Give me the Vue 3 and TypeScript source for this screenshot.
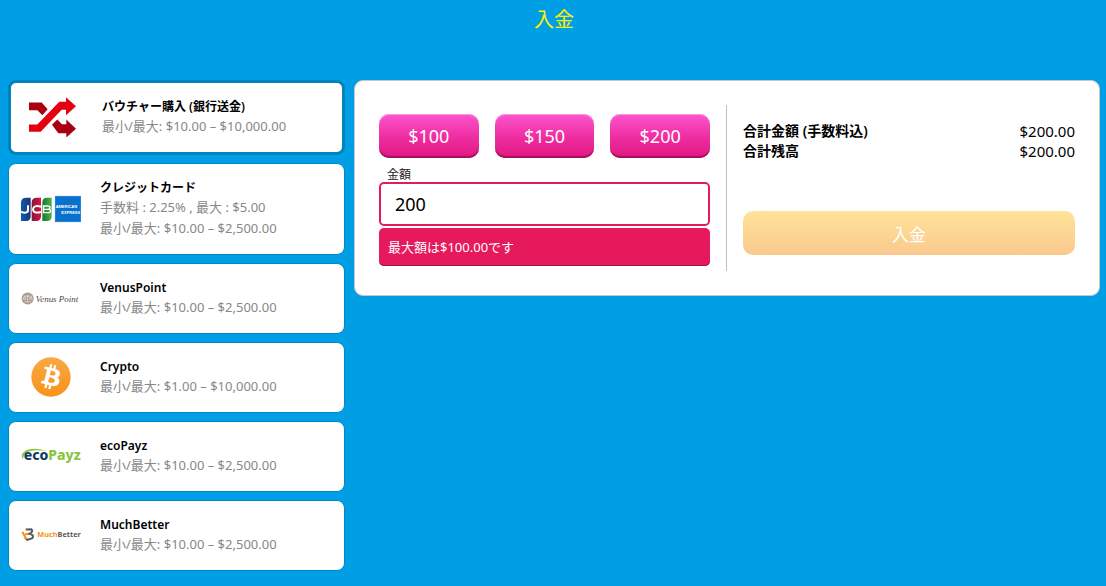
<script setup lang="ts">
import { ref } from 'vue'

interface Method {
  id: string
  name: string
  details: string[]
}

const methods: Method[] = [
  { id: 'voucher', name: 'バウチャー購入 (銀行送金)', details: ['最小/最大: $10.00 – $10,000.00'] },
  { id: 'card', name: 'クレジットカード', details: ['手数料 : 2.25% , 最大 : $5.00', '最小/最大: $10.00 – $2,500.00'] },
  { id: 'venus', name: 'VenusPoint', details: ['最小/最大: $10.00 – $2,500.00'] },
  { id: 'crypto', name: 'Crypto', details: ['最小/最大: $1.00 – $10,000.00'] },
  { id: 'eco', name: 'ecoPayz', details: ['最小/最大: $10.00 – $2,500.00'] },
  { id: 'much', name: 'MuchBetter', details: ['最小/最大: $10.00 – $2,500.00'] },
]
const presets = [100, 150, 200]
const selected = ref('voucher')
const amount = ref('200')
const total = () => '$' + (Number(amount.value) || 0).toFixed(2)
</script>

<template>
  <main class="page">
    <h1 class="title">入金</h1>
    <div class="layout">
      <div class="methods">
        <button
          v-for="m in methods"
          :key="m.id"
          type="button"
          class="method"
          :class="{ active: selected === m.id }"
          :aria-pressed="selected === m.id"
          @click="selected = m.id"
        >
          <svg class="logo" viewBox="0 0 60 40" aria-hidden="true">
            <g v-if="m.id === 'voucher'" transform="translate(-13 -12.5) scale(.3333)">
              <path fill="#a8000f" d="M57 54H95L113 74 97 92 82 77H57ZM126 121L142 105 156 119H169V105L198 133 169 159V146H145Z" />
              <path fill="#e3000f" d="M57 120H82L148 52H168V38L198 65 168 92V76H155L92 142H57Z" />
            </g>
            <g v-else-if="m.id === 'card'" transform="translate(-21 -29) scale(.3333)">
              <defs>
                <linearGradient id="jcb-blue"><stop stop-color="#0a5fac" /><stop offset="1" stop-color="#1d3378" /></linearGradient>
                <linearGradient id="jcb-red"><stop stop-color="#7d1b3d" /><stop offset="1" stop-color="#e0113c" /></linearGradient>
                <linearGradient id="jcb-green"><stop stop-color="#0b7a3b" /><stop offset="1" stop-color="#52b043" /></linearGradient>
              </defs>
              <path fill="url(#jcb-blue)" d="M63 128Q63 113 78 113H92V169Q92 183 78 183H63Z" />
              <path fill="url(#jcb-red)" d="M95 128Q95 113 110 113H123V169Q123 183 109 183H95Z" />
              <path fill="url(#jcb-green)" d="M127 128Q127 113 141 113H155V169Q155 183 141 183H127Z" />
              <g fill="none" stroke="#fff" stroke-width="6">
                <path d="M84 136V151Q84 158 75 158Q68 158 63 155" />
                <path d="M123 140Q100 134 99 148Q100 162 123 156" />
                <path d="M128 138H142Q150 138 150 143Q150 148 142 148H128M128 148H144Q152 148 152 153Q152 158 144 158H128M131 138V158" stroke-width="4" />
              </g>
              <path fill="#0871ce" d="M165 108H243V186H165Z" />
              <path fill="none" stroke="#3f93dd" stroke-width="2" d="M166 109H242V185H166Z" />
              <g class="amex" fill="#fff">
                <text x="167" y="144">AMERICAN</text>
                <text x="184" y="161">EXPRESS</text>
              </g>
            </g>
            <g v-else-if="m.id === 'venus'" transform="translate(-11 -8.5) scale(.3333)">
              <circle cx="53" cy="87" r="18" fill="#aa9b92" />
              <path fill="none" stroke="#f0ebe7" stroke-width="2" d="M53 75V96M44 97H62M42 80H64M43 81L39 89H48L43 81M63 81L58 89H67L63 81" />
              <text class="venus-word" x="77" y="97">Venus Point</text>
            </g>
            <g v-else-if="m.id === 'crypto'" transform="translate(10 0) scale(.625)">
              <defs>
                <linearGradient id="coin" x2="0" y2="1"><stop stop-color="#faa846" /><stop offset="1" stop-color="#f7931a" /></linearGradient>
              </defs>
              <circle cx="32" cy="32" r="31.5" fill="url(#coin)" />
              <path fill="#fff" d="M46.11 27.44c.636-4.26-2.6-6.55-7.03-8.07l1.44-5.77-3.51-.875-1.4 5.61c-.92-.23-1.87-.447-2.81-.662l1.41-5.65-3.51-.875-1.44 5.76c-.764-.174-1.51-.346-2.24-.527l.004-.018-4.84-1.21-.934 3.75s2.6.597 2.55.634c1.42.355 1.68 1.29 1.64 2.04l-3.94 15.8c-.174.432-.615 1.08-1.61.834.035.051-2.55-.637-2.55-.637l-1.74 4.02 4.57 1.14c.85.213 1.68.436 2.5.646l-1.45 5.83 3.51.875 1.44-5.77c.957.26 1.89.5 2.8.726l-1.43 5.74 3.51.875 1.45-5.82c5.99 1.13 10.5.676 12.4-4.74 1.53-4.36-.076-6.88-3.23-8.52 2.29-.53 4.02-2.04 4.48-5.15zm-8.02 11.2c-1.09 4.36-8.43 2-10.8 1.41l1.93-7.73c2.38.594 10 1.77 8.88 6.32zm1.09-11.3c-.99 3.97-7.1 1.95-9.08 1.46l1.75-7.01c1.98.494 8.36 1.42 7.33 5.55z" />
            </g>
            <g v-else-if="m.id === 'eco'" transform="translate(-11 -6.5) scale(.3333)">
              <path fill="#8cc63f" d="M39 90Q30 76 43 66Q65 50 112 65Q66 58 48 70Q38 78 39 90Z" />
              <text class="eco-word" x="41" y="92" fill="#123a63">eco<tspan fill="#8cc63f">Payz</tspan></text>
            </g>
            <g v-else transform="translate(-11 -5.5) scale(.3333)">
              <path fill="none" stroke="#595959" stroke-width="6" d="M47 60L64 59Q70 64 62 71L54 74M61 73Q73 78 67 86L52 91L45 85" />
              <path fill="none" stroke="#f7941d" stroke-width="6" d="M37 67L49 89M45 75L54 73" />
              <text class="much-word" x="82" y="82" fill="#f7941d">Much<tspan fill="#595959">Better</tspan></text>
            </g>
          </svg>
          <span class="info">
            <span class="name">{{ m.name }}</span>
            <span v-for="d in m.details" :key="d" class="detail">{{ d }}</span>
          </span>
        </button>
      </div>

      <form class="panel" @submit.prevent>
        <section class="entry">
          <div class="presets">
            <button v-for="p in presets" :key="p" type="button" class="preset" @click="amount = String(p)">${{ p }}</button>
          </div>
          <label class="label" for="amount">金額</label>
          <input id="amount" v-model="amount" class="amount" type="text" inputmode="decimal" aria-invalid="true" aria-describedby="amount-error" />
          <div id="amount-error" class="error" role="alert">最大額は$100.00です</div>
        </section>
        <section class="summary">
          <dl class="totals">
            <div class="row"><dt>合計金額 (手数料込)</dt><dd>{{ total() }}</dd></div>
            <div class="row"><dt>合計残高</dt><dd>{{ total() }}</dd></div>
          </dl>
          <button type="submit" class="submit" disabled>入金</button>
        </section>
      </form>
    </div>
  </main>
</template>

<style>
body {
  background: #009fe5;
}
</style>

<style scoped>
* {
  box-sizing: border-box;
}
.page,
.page button,
.page input {
  font-family: 'Noto Sans', 'Noto Sans CJK JP', sans-serif;
}
.page {
  padding: 0 6px 15px 8px;
}
.title {
  margin: 0 0 40px;
  color: #ffed00;
  font-size: 20px;
  font-weight: 400;
  line-height: 40px;
  text-align: center;
}
.layout {
  display: grid;
  grid-template-columns: 337fr 746fr;
  gap: 9px;
  align-items: start;
}
.methods {
  display: flex;
  flex-direction: column;
  gap: 8px;
}
.method {
  display: flex;
  align-items: center;
  gap: 19px;
  width: 100%;
  padding: 14px 12px 15px;
  border: 1px solid #0088c4;
  border-radius: 8px;
  background: #fff;
  text-align: left;
  cursor: pointer;
}
.method.active {
  border: 3px solid #0083bd;
}
.logo {
  flex: none;
  width: 60px;
  height: 40px;
}
.info,
.name,
.detail {
  display: block;
}
.name {
  color: #000;
  font-size: 12px;
  font-weight: 600;
  line-height: 19px;
}
.detail {
  color: #888;
  font-size: 13px;
  line-height: 21px;
}
.amex {
  font: bold 12px 'Liberation Sans', sans-serif;
}
.venus-word {
  fill: #51463f;
  font: italic 27px 'Liberation Serif', serif;
}
.eco-word {
  font: 800 42px 'Noto Sans', sans-serif;
}
.much-word {
  font: bold 22px 'Noto Sans', sans-serif;
}
.panel {
  display: grid;
  grid-template-columns: 347fr 349fr;
  padding: 24px;
  border: 1px solid #c6c6c6;
  border-radius: 9px;
  background: #fff;
}
.entry {
  padding: 9px 16px 5px 0;
}
.presets {
  display: grid;
  grid-template-columns: repeat(3, 1fr);
  gap: 16px;
}
.preset {
  height: 44px;
  padding: 0;
  border: 0;
  border-radius: 10px;
  background: linear-gradient(#fb55cc, #ee2ca0 55%, #e11880);
  box-shadow: inset 0 1px 1px #ff9be2, inset 0 -2px 1px #a80f61;
  color: #fff;
  font-size: 18px;
  cursor: pointer;
}
.label {
  display: block;
  margin-top: 9px;
  padding-left: 8px;
  color: #222;
  font-size: 12px;
  line-height: 15px;
}
.amount {
  display: block;
  width: 100%;
  height: 44px;
  padding: 0 14px;
  border: 2px solid #e6195c;
  border-radius: 5px;
  background: #fff;
  color: #000;
  font-size: 18px;
  outline: none;
}
.error {
  margin-top: 2px;
  padding: 0 9px;
  border-radius: 5px;
  background: #e6195c;
  box-shadow: inset 0 -1px 0 #a80f42;
  color: #fff;
  font-size: 13px;
  line-height: 38px;
}
.summary {
  padding: 16px 0 0 16px;
  border-left: 1px solid #bfbfbf;
}
.totals {
  margin: 0 0 50px;
}
.row {
  display: flex;
  justify-content: space-between;
  line-height: 20px;
}
.row dt {
  color: #000;
  font-size: 14px;
  font-weight: 600;
}
.row dd {
  margin: 0;
  color: #000;
  font-size: 15px;
}
.submit {
  display: block;
  width: 100%;
  height: 44px;
  padding: 0;
  border: 0;
  border-radius: 10px;
  background: linear-gradient(#ffe398, #fac88f);
  color: #fff;
  font-size: 17px;
}
</style>
